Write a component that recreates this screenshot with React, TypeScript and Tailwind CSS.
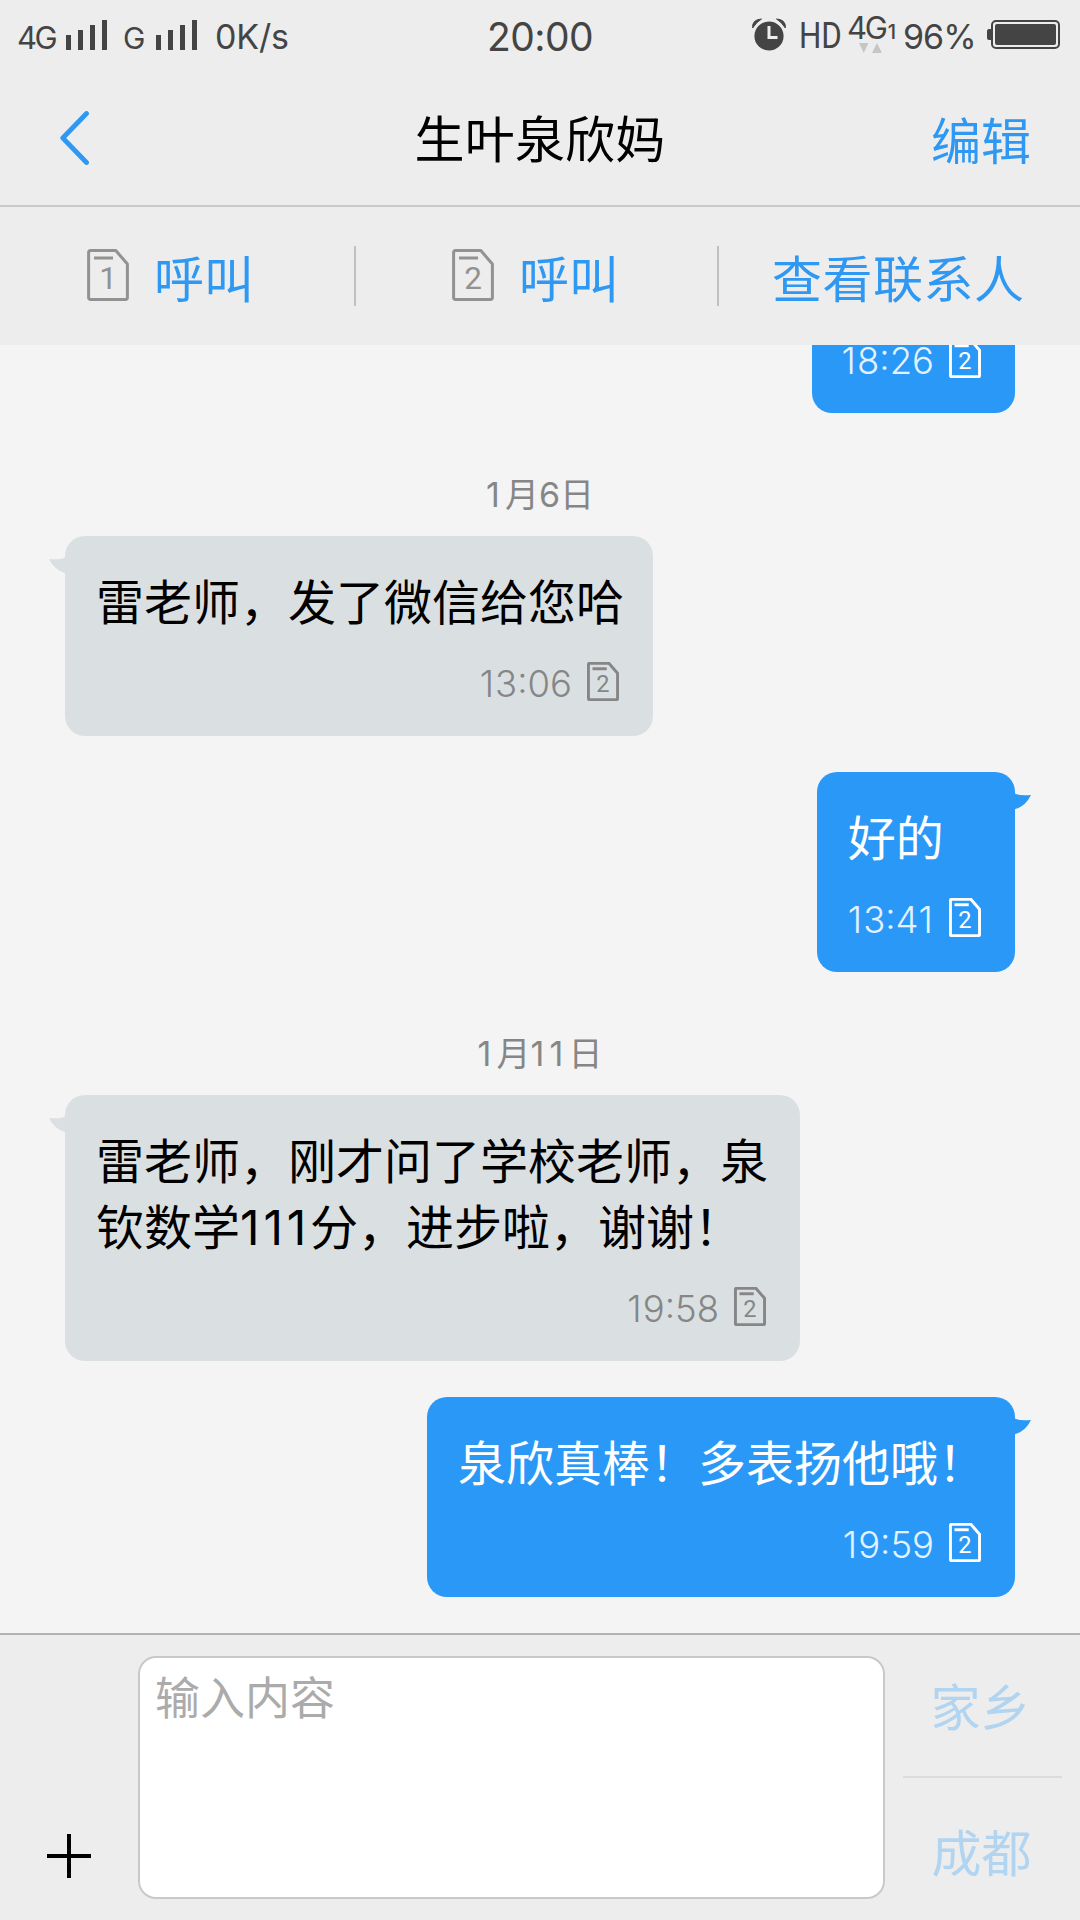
import React from "react";
import clsx from "clsx";

type Message = {
  id: string;
  outgoing: boolean;
  text: string;
  time: string;
};

type MessageGroup = {
  date: string;
  messages: Message[];
};

const GROUPS: MessageGroup[] = [
  {
    date: "1月6日",
    messages: [
      { id: "m1", outgoing: false, text: "雷老师，发了微信给您哈", time: "13:06" },
      { id: "m2", outgoing: true, text: "好的", time: "13:41" },
    ],
  },
  {
    date: "1月11日",
    messages: [
      { id: "m3", outgoing: false, text: "雷老师，刚才问了学校老师，泉钦数学111分，进步啦，谢谢！", time: "19:58" },
      { id: "m4", outgoing: true, text: "泉欣真棒！多表扬他哦！", time: "19:59" },
    ],
  },
];

// Inter's "1" is very narrow, give runs of it some air
function WideOnes({ text, className }: { text: string; className: string }) {
  return (
    <>
      {text.split(/(1+)/).map((part, i) =>
        part.startsWith("1") ? (
          <span key={i} className={className}>
            {part}
          </span>
        ) : (
          part
        ),
      )}
    </>
  );
}

function SimIcon({ slot, stroke = 3, className }: { slot: number; stroke?: number; className?: string }) {
  return (
    <svg viewBox="0 0 42 52" fill="none" stroke="currentColor" strokeWidth={stroke} className={className}>
      <path d="M3.5 1.6H28.8L40.4 15V48.5Q40.4 50.4 38.5 50.4H3.5Q1.6 50.4 1.6 48.5V3.5Q1.6 1.6 3.5 1.6Z" strokeLinejoin="round" />
      <path d="M7 9H26" />
      <text x="21" y="40.3" textAnchor="middle" fontSize="31.5" fill="currentColor" stroke="none" className="font-['Roboto',sans-serif] font-normal">
        {slot}
      </text>
    </svg>
  );
}

function SignalBars() {
  return (
    <div className="flex h-[30px] items-end gap-[7px]">
      <i className="h-[15px] w-[5px] bg-[#444]" />
      <i className="h-5 w-[5px] bg-[#444]" />
      <i className="h-[25px] w-[5px] bg-[#444]" />
      <i className="h-[30px] w-[5px] bg-[#444]" />
    </div>
  );
}

function AlarmIcon() {
  return (
    <svg viewBox="0 0 34 33" className="h-[33px] w-[34px]">
      <circle cx="17" cy="18" r="14.6" fill="#444" />
      <path d="M0.6 10Q0 1.5 9.5 1Q5 3.5 0.6 10ZM33.4 10Q34 1.5 24.5 1Q29 3.5 33.4 10Z" fill="#444" stroke="#444" strokeWidth="1" />
      <path d="M17 8V19.5H25.5" fill="none" stroke="#ededed" strokeWidth="3" />
    </svg>
  );
}

function StatusBar() {
  return (
    <div className="grid h-[70px] grid-cols-[1fr_auto_1fr] items-start text-[#444]">
      <div className="flex pl-[17px]">
        <span className="mt-[22px] w-[49px] text-[31px] leading-8 tracking-[-2.5px]">4G</span>
        <div className="mt-5">
          <SignalBars />
        </div>
        <span className="mt-[22px] ml-4 w-[33px] text-[30px] leading-8 tracking-[-2px]">G</span>
        <div className="mt-5">
          <SignalBars />
        </div>
        <span className="mt-[21px] ml-[18px] text-[34px] leading-8 tracking-[-0.2px]">0K/s</span>
      </div>
      <span className="mt-[17px] text-[39px] leading-[40px] tracking-[-0.6px]">20:00</span>
      <div className="flex justify-end pr-5">
        <div className="mt-[18px] w-[47px]">
          <AlarmIcon />
        </div>
        <span className="mt-5 w-[48px] origin-left scale-x-[0.87] font-['Roboto',sans-serif] text-[36px] leading-8">HD</span>
        <div className="mt-3 w-[56px]">
          <div className="flex items-end leading-8">
            <span className="text-[31px] tracking-[-2.2px]">4G</span>
            <span className="ml-0.5 text-[20px] leading-6 font-medium">1</span>
          </div>
          <svg viewBox="0 0 24 10" className="-mt-px ml-3 h-2.5 w-6 fill-[#c6c6c6]">
            <path d="M0 0H9.5L4.75 10ZM13 10H23L18 0Z" />
          </svg>
        </div>
        <span className="mt-[21px] w-[84px] text-[34px] leading-8 tracking-[-1px]">96%</span>
        <div className="mt-5 flex h-[29px] items-center">
          <i className="h-[11px] w-1 rounded-l-[2px] bg-[#444]" />
          <div className="h-[29px] w-[69px] rounded-[5px] border-2 border-[#444] p-0.5">
            <div className="h-full rounded-[2px] bg-[#444]" />
          </div>
        </div>
      </div>
    </div>
  );
}

function TitleBar() {
  return (
    <div className="grid h-[135px] grid-cols-[1fr_auto_1fr] items-start">
      <svg viewBox="0 0 29 54" className="mt-[41px] ml-[60px] h-[54px] w-[29px]">
        <path d="M26.5 2.5L2.8 27L26.5 51.5" fill="none" stroke="#2e98f2" strokeWidth="4.8" strokeLinecap="round" strokeLinejoin="round" />
      </svg>
      <h1 className="mt-10 text-[50px] leading-[60px] tracking-[0.2px] text-black">生叶泉欣妈</h1>
      <button className="mt-[42px] mr-[49px] justify-self-end text-[50px] leading-[60px] text-[#2e98f2]">编辑</button>
    </div>
  );
}

function CallAction({ slot }: { slot: number }) {
  return (
    <button className="flex items-center text-[50px] text-[#2e98f2]">
      <SimIcon slot={slot} className="mb-0.5 h-[52px] w-[42px] text-[#929292]" />
      <span className="ml-[25px] pt-2">呼叫</span>
    </button>
  );
}

function ActionBar() {
  return (
    <div className="flex h-[140px] items-center border-t-2 border-[#c9c9c9]">
      <div className="flex w-[354px] pl-[87px]">
        <CallAction slot={1} />
      </div>
      <i className="h-[60px] w-0.5 bg-[#c0c0c0]" />
      <div className="flex w-[361px] pl-24">
        <CallAction slot={2} />
      </div>
      <i className="h-[60px] w-0.5 bg-[#c0c0c0]" />
      <button className="pt-2 pl-[53px] text-[50px] tracking-[0.5px] text-[#2e98f2]">查看联系人</button>
    </div>
  );
}

function BubbleMeta({ time, outgoing }: { time: string; outgoing: boolean }) {
  return (
    <div className={clsx("flex h-11 items-center justify-end", outgoing ? "text-white" : "text-[#868686]")}>
      <span className={clsx("mt-[7px] text-[36.5px] leading-[37px] font-light", outgoing && "text-[#e4f2ff]")}>
        <WideOnes text={time} className="tracking-[0.03em]" />
      </span>
      <SimIcon slot={2} stroke={3.9} className="ml-[15px] h-[39px] w-8" />
    </div>
  );
}

function Bubble({ message }: { message: Message }) {
  const { outgoing, text, time } = message;

  return (
    <div
      className={clsx(
        "relative w-fit max-w-[735px] rounded-[20px] pt-[34px] pr-[34px] pb-[33px] pl-[31px]",
        outgoing ? "mr-[65px] self-end bg-[#2998f7] text-white" : "ml-[65px] bg-[#dae0e2] text-black",
      )}
    >
      <svg
        viewBox="0 0 17 18"
        className={clsx(
          "absolute top-[21px] h-[18px] w-[17px]",
          outgoing ? "right-[-16px] fill-[#2998f7]" : "left-[-16px] -scale-x-100 fill-[#dae0e2]",
        )}
      >
        <path d="M0 0Q5 3.2 17 2Q11.5 13.5 0 16.5Z" />
      </svg>
      <p className="mr-[-5px] text-[48px] leading-[66px]">
        <WideOnes text={text} className="tracking-[0.08em]" />
      </p>
      <div className="mt-[23px]">
        <BubbleMeta time={time} outgoing={outgoing} />
      </div>
    </div>
  );
}

function Composer() {
  return (
    <footer className="flex h-[287px] border-t-2 border-[#b1b2b1] bg-[#ededed]">
      <button className="flex w-[138px] items-end pb-[42px] pl-[47px]">
        <svg viewBox="0 0 44 44" className="size-11">
          <path d="M0 22H44M22 0V44" stroke="#000" strokeWidth="4" />
        </svg>
      </button>
      <div className="mt-[21px] h-[243px] w-[747px] rounded-[18px] border-2 border-[#c9c9c9] bg-white pt-2 pl-[15px] text-[45px] leading-[66px] text-[#ababab]">
        输入内容
      </div>
      <div className="ml-[18px] flex w-[159px] flex-col text-[50px] text-[#b1d4f1]">
        <button className="h-[142px] pt-1.5 pr-1">家乡</button>
        <i className="h-0.5 bg-[#dcdcdc]" />
        <button className="h-[143px] pt-3 pr-0.5">成都</button>
      </div>
    </footer>
  );
}

export default function App() {
  return (
    <div
      lang="zh-CN"
      className="flex h-[1920px] w-[1080px] flex-col overflow-hidden bg-[#f4f4f4] font-['Inter','Noto_Sans_CJK_SC',sans-serif]"
    >
      <header className="bg-[#ededed]">
        <StatusBar />
        <TitleBar />
        <ActionBar />
      </header>

      <main className="flex flex-1 flex-col overflow-hidden">
        {/* last bubble of the previous day, scrolled mostly under the header */}
        <div className="mr-[65px] flex h-[68px] w-[203px] flex-col justify-end self-end rounded-b-[20px] bg-[#2998f7] pr-[34px] pb-[33px]">
          <BubbleMeta time="18:26" outgoing />
        </div>
        {GROUPS.map((group) => (
          <section key={group.date} className="flex flex-col">
            <p className="mt-[57px] mb-4 text-center text-[34px] leading-[50px] text-[#868686]">
              <WideOnes text={group.date} className="tracking-[0.15em]" />
            </p>
            <div className="flex flex-col gap-9">
              {group.messages.map((message) => (
                <Bubble key={message.id} message={message} />
              ))}
            </div>
          </section>
        ))}
      </main>

      <Composer />
    </div>
  );
}
